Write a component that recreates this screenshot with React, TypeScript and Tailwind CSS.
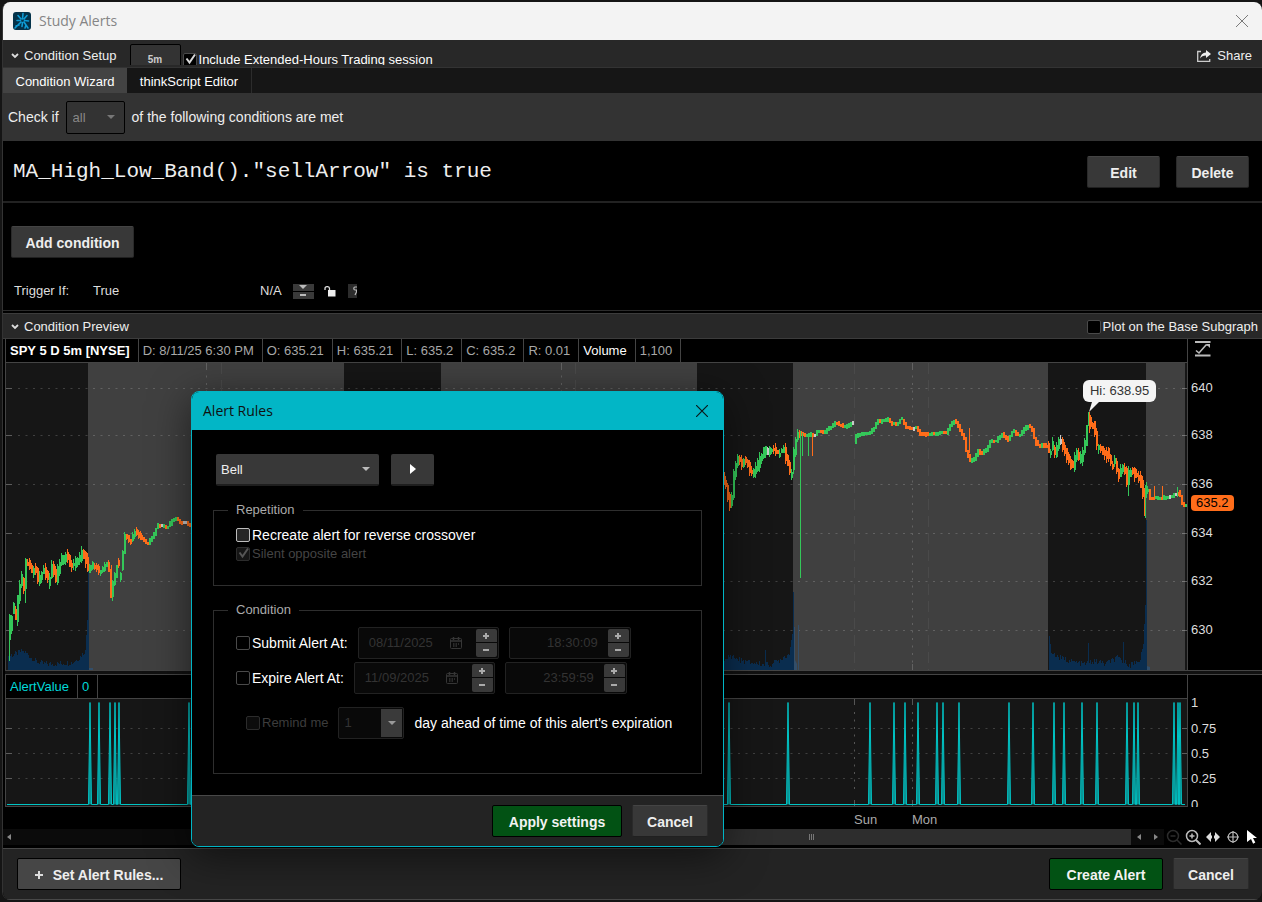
import { useId, type ReactNode } from "react";

type Point = [number, number];

interface Bar {
  x: number;
  top: number;
  bottom: number;
  color: string;
}

const UP = "#34c759";
const DOWN = "#ff6d1a";
const FLAT = "#c8c8c8";

const CHART_W = 1182;
const PRICE_H = 307;
const ALERT_H = 107;

const PRICE_TICKS = [
  { label: "640", y: 25 },
  { label: "638", y: 72 },
  { label: "636", y: 121 },
  { label: "634", y: 170 },
  { label: "632", y: 218 },
  { label: "630", y: 267 },
];

const ALERT_TICKS = [
  { label: "1", y: 4 },
  { label: "0.75", y: 30 },
  { label: "0.5", y: 55 },
  { label: "0.25", y: 80 },
  { label: "0", y: 106 },
];

const QUOTE = [
  "D: 8/11/25 6:30 PM",
  "O: 635.21",
  "H: 635.21",
  "L: 635.2",
  "C: 635.2",
  "R: 0.01",
];

// extended-hours sessions, drawn lighter
const SESSIONS: Point[] = [
  [83, 339],
  [436, 692],
  [788, 1043],
  [1141, 1180],
];

// price path, split where the feed has a gap
const PRICE_PATHS: { spread: number; points: Point[] }[] = [
  {
    spread: 6,
    points: [
      [4, 280], [5, 265], [7, 261], [9, 246], [12, 255], [14, 235], [17, 218], [20, 225],
      [22, 200], [25, 201], [28, 208], [31, 206], [34, 215], [36, 216], [39, 208], [42, 211],
      [45, 218], [48, 205], [52, 216], [54, 208], [57, 198], [60, 196], [63, 193], [66, 201],
      [69, 203], [72, 200], [76, 193], [78, 189], [81, 196], [84, 206],
    ],
  },
  {
    spread: 3,
    points: [
      [85, 206], [88, 203], [92, 204], [95, 209], [99, 206], [103, 201], [105, 208], [107, 232],
      [109, 221], [112, 208], [114, 200], [116, 213], [118, 197], [121, 173], [124, 175],
      [126, 178], [129, 172], [132, 169], [135, 173],
    ],
  },
  {
    spread: 2,
    points: [
      [136, 173], [139, 176], [143, 181], [147, 176], [150, 171], [153, 163], [158, 163],
      [163, 164], [168, 158], [172, 156], [177, 160], [182, 160], [188, 164],
    ],
  },
  {
    spread: 6,
    points: [
      [718, 114], [722, 123], [724, 133], [726, 142], [728, 133], [730, 111], [732, 103],
      [734, 96], [738, 100], [741, 98], [745, 106], [749, 109], [752, 106], [756, 96], [760, 87],
      [765, 89], [770, 88], [775, 91], [780, 87], [783, 96], [787, 112], [789, 98], [792, 77],
      [794, 72],
    ],
  },
  {
    spread: 2,
    points: [
      [795, 70], [798, 71], [802, 73], [806, 71], [810, 72], [814, 68], [819, 70], [825, 65],
      [832, 60], [836, 62], [840, 64], [845, 62], [848, 60],
    ],
  },
  {
    spread: 2,
    points: [
      [850, 79], [852, 73], [858, 71], [865, 70], [870, 65], [873, 59], [878, 58], [884, 56],
      [888, 61], [893, 61], [897, 56], [902, 64], [908, 66], [912, 64], [916, 71], [922, 71],
      [930, 71], [937, 70], [942, 70], [947, 61], [951, 58], [955, 65], [960, 75], [962, 88],
      [966, 98], [970, 96], [974, 88], [978, 91], [983, 85], [986, 78], [992, 78], [998, 71],
      [1004, 77], [1009, 68], [1015, 73], [1020, 66], [1025, 63], [1028, 67], [1031, 78],
      [1035, 83], [1040, 82], [1042, 83],
    ],
  },
  {
    spread: 6,
    points: [
      [1043, 83], [1046, 91], [1048, 83], [1051, 90], [1054, 81], [1057, 79], [1060, 85],
      [1063, 95], [1066, 101], [1069, 103], [1072, 93], [1077, 96], [1080, 85], [1082, 73],
      [1084, 57], [1087, 61], [1090, 65], [1093, 83], [1097, 85], [1101, 91], [1104, 91],
      [1108, 103], [1111, 98], [1114, 110], [1118, 106], [1121, 108], [1123, 118], [1125, 111],
      [1128, 108], [1132, 111], [1135, 116], [1138, 125], [1140, 140], [1141, 128],
    ],
  },
  {
    spread: 2,
    points: [
      [1142, 127], [1144, 127], [1146, 135], [1150, 135], [1157, 135], [1163, 135], [1170, 132],
      [1175, 131], [1178, 140], [1180, 142],
    ],
  },
];

const WICKS: Bar[] = [
  { x: 4, top: 265, bottom: 298, color: UP },
  { x: 20, top: 215, bottom: 240, color: UP },
  { x: 106, top: 202, bottom: 235, color: DOWN },
  { x: 107, top: 220, bottom: 238, color: UP },
  { x: 795, top: 68, bottom: 215, color: UP },
  { x: 797, top: 70, bottom: 93, color: UP },
  { x: 803, top: 71, bottom: 93, color: UP },
  { x: 807, top: 71, bottom: 93, color: DOWN },
  { x: 964, top: 65, bottom: 90, color: DOWN },
  { x: 1084, top: 49, bottom: 70, color: DOWN },
  { x: 1123, top: 103, bottom: 133, color: UP },
  { x: 1139, top: 125, bottom: 153, color: DOWN },
  { x: 1140, top: 122, bottom: 155, color: UP },
  { x: 1149, top: 123, bottom: 135, color: DOWN },
  { x: 1157, top: 123, bottom: 135, color: DOWN },
  { x: 1172, top: 124, bottom: 134, color: UP },
];

const VOLUME: Point[][] = [
  [[3, 14], [10, 16], [17, 19], [23, 15], [30, 9], [38, 6], [50, 6], [60, 7], [68, 8], [74, 12], [80, 20], [82, 50], [83, 99]],
  [[719, 7], [724, 15], [730, 12], [740, 8], [755, 6], [765, 5], [772, 9], [780, 14], [784, 16], [786, 30], [787, 36], [788, 78]],
  [[1044, 34], [1046, 17], [1055, 12], [1065, 9], [1078, 6], [1090, 9], [1100, 6], [1112, 12], [1125, 5], [1135, 11], [1138, 26], [1140, 65], [1141, 150]],
];

const VOLUME_SPIKES: Point[] = [
  [760, 20],
  [1083, 27],
  [1118, 28],
];

const ALERTS = [
  85, 94, 105, 110, 114, 184, 724, 783, 865, 889, 900, 913, 932, 938, 954, 1004, 1028, 1049, 1059,
  1077, 1092, 1122, 1129, 1133, 1169, 1173, 1175,
];

// repeatable pseudo random value in 0..1
function noise(seed: number) {
  const v = Math.sin(seed * 12.9898) * 43758.5453;
  return v - Math.floor(v);
}

function valueAt(points: Point[], x: number) {
  for (let i = 1; i < points.length; i++) {
    const [x0, y0] = points[i - 1];
    const [x1, y1] = points[i];
    if (x <= x1) return y0 + ((y1 - y0) * (x - x0)) / (x1 - x0);
  }
  return points[points.length - 1][1];
}

// each bar has a 2px body, active sessions also get a 1px wick
function buildBars(points: Point[], spread: number): (Bar & { w: number })[] {
  const bars: (Bar & { w: number })[] = [];
  const end = points[points.length - 1][0];
  for (let x = points[0][0]; x <= end; x += 2) {
    const y = valueAt(points, x + 1) + (noise(x + 0.1) - 0.5) * spread * 0.5;
    const slope = valueAt(points, x + 2) - valueAt(points, x);
    const n = noise(x);
    let color = slope + (n - 0.5) * spread * 0.9 > 0 ? DOWN : UP;
    if (n > 0.94 && Math.abs(slope) < 2) color = FLAT;
    const half = 1.2 + noise(x + 0.3) * spread * 0.5 + Math.abs(slope) / 2;
    const top = Math.round(y - half);
    const bottom = Math.round(y + half);
    bars.push({ x, top, bottom, color, w: 2 });
    if (spread > 2) {
      bars.push({
        x,
        top: Math.round(top - noise(x + 0.5) * spread * 0.7),
        bottom: Math.round(bottom + noise(x + 0.7) * spread * 0.7),
        color,
        w: 1,
      });
    }
  }
  return bars;
}

const PRICE_BARS = PRICE_PATHS.flatMap((p) => buildBars(p.points, p.spread));

const VOLUME_BARS = VOLUME.flatMap((points) => {
  const bars: Point[] = [];
  for (let x = points[0][0]; x <= points[points.length - 1][0]; x++) {
    const h = valueAt(points, x);
    bars.push([x, Math.round(h + (h < 20 ? (noise(x) - 0.5) * 6 : 0))]);
  }
  return bars;
});

const ALERT_LINE =
  "M2 105.5" + ALERTS.map((x) => ` L${x - 1.5} 105.5 L${x} 3.5 L${x + 1.5} 105.5`).join("") + " L1180 105.5";

function GridRow({ y }: { y: number }) {
  return (
    <g stroke="#fff" strokeOpacity={0.18}>
      <line x1={13} x2={CHART_W - 6} y1={y + 0.5} y2={y + 0.5} strokeDasharray="2 5.5" />
      <line x1={0} x2={7} y1={y + 0.5} y2={y + 0.5} strokeOpacity={0.3} />
      <line x1={CHART_W - 5} x2={CHART_W} y1={y + 0.5} y2={y + 0.5} strokeOpacity={0.3} />
    </g>
  );
}

function PriceChart() {
  return (
    <svg
      className="block h-[307px] w-full"
      viewBox={`0 0 ${CHART_W} ${PRICE_H}`}
      preserveAspectRatio="none"
    >
      <rect width={CHART_W} height={PRICE_H} fill="#161616" />
      {SESSIONS.map(([from, to]) => (
        <rect key={from} x={from} width={to - from} height={PRICE_H} fill="#404040" />
      ))}

      {/* Grid */}
      {PRICE_TICKS.map((t) => (
        <GridRow key={t.label} y={t.y} />
      ))}
      {[201, 556, 907].map((x) => (
        <g key={x} stroke="#626262">
          <line x1={x + 0.5} x2={x + 0.5} y1={5} y2={PRICE_H} strokeDasharray="2 5.5" />
          <line x1={x + 0.5} x2={x + 0.5} y1={0} y2={6} />
          <line x1={x + 0.5} x2={x + 0.5} y1={PRICE_H - 6} y2={PRICE_H} />
        </g>
      ))}
      {[216, 570, 849, 923].map((x) => (
        <line key={x} x1={x + 0.5} x2={x + 0.5} y1={0} y2={PRICE_H} stroke="#4a4a4a" strokeDasharray="11 6" />
      ))}

      {/* Volume */}
      {[...VOLUME_BARS, ...VOLUME_SPIKES].map(([x, h], i) => (
        <rect key={i} x={x} y={PRICE_H - h} width={1} height={h} fill="#0a2d4f" />
      ))}
      <rect x={793} y={262} width={1} height={45} fill="#334e69" />
      <rect x={789} y={264} width={1} height={43} fill="#334e69" />
      <path d="M84 307v-2h4v2zM790 307v-10l2 4v6zM1142 307v-4l3 1v3z" fill="#334e69" />

      {/* Candles */}
      {PRICE_BARS.map((b, i) => (
        <rect key={i} x={b.x} y={b.top} width={b.w} height={b.bottom - b.top} fill={b.color} />
      ))}
      {WICKS.map((b) => (
        <rect key={b.x} x={b.x} y={b.top} width={1} height={b.bottom - b.top} fill={b.color} />
      ))}
      <line x1={0.5} x2={0.5} y1={0} y2={PRICE_H} stroke="#444" />
    </svg>
  );
}

function AlertChart() {
  return (
    <svg
      className="block h-[107px] w-full"
      viewBox={`0 0 ${CHART_W} ${ALERT_H}`}
      preserveAspectRatio="none"
    >
      <rect width={CHART_W} height={ALERT_H} fill="#161616" />
      {ALERT_TICKS.slice(1, 4).map((t) => (
        <GridRow key={t.label} y={t.y - 1} />
      ))}
      {[849, 907].map((x) => (
        <g key={x} stroke="#555">
          <line x1={x + 0.5} x2={x + 0.5} y1={13} y2={90} strokeDasharray="2 5.5" />
          <line x1={x + 0.5} x2={x + 0.5} y1={0} y2={6} />
          <line x1={x + 0.5} x2={x + 0.5} y1={101} y2={107} />
        </g>
      ))}
      <path d={ALERT_LINE} fill="#0b8f90" stroke="#00c3c4" strokeWidth={1} strokeLinejoin="bevel" />
      <line x1={0.5} x2={0.5} y1={0} y2={ALERT_H} stroke="#444" />
    </svg>
  );
}

interface CheckProps {
  children: ReactNode;
  checked?: boolean;
  disabled?: boolean;
  box?: string;
  text?: string;
  tick?: string;
}

function Check({
  children,
  checked,
  disabled,
  box = "border-[#4a4a4a] bg-black",
  text = "text-white",
  tick = "text-[#d8d8d8]",
}: CheckProps) {
  const id = useId();
  return (
    <div className="flex shrink-0 items-center gap-0.5">
      <span className="relative flex">
        <input
          id={id}
          type="checkbox"
          defaultChecked={checked}
          disabled={disabled}
          className={`h-3.5 w-3.5 appearance-none rounded-xs border ${box}`}
        />
        {checked && (
          <svg
            className={`pointer-events-none absolute inset-0 h-3.5 w-3.5 ${tick}`}
            viewBox="0 0 14 14"
            fill="none"
            stroke="currentColor"
            strokeWidth={2}
          >
            <path d="M3.5 5.5l3 4L12 1.5" />
          </svg>
        )}
      </span>
      <label htmlFor={id} className={`whitespace-nowrap ${text}`}>
        {children}
      </label>
    </div>
  );
}

function Caret({ className = "" }: { className?: string }) {
  return (
    <svg className={`pointer-events-none h-1 w-2 ${className}`} viewBox="0 0 8 4" fill="currentColor">
      <path d="M0 0h8L4 4z" />
    </svg>
  );
}

function DarkButton({ children, className = "" }: { children: ReactNode; className?: string }) {
  return (
    <button
      type="button"
      className={`h-8 rounded-xs border border-t-[#444] border-r-[#2a2a2a] border-b-[#202020] border-l-[#2a2a2a] bg-[#383838] pt-0.5 text-sm font-bold text-[#eee] ${className}`}
    >
      {children}
    </button>
  );
}

function GreenButton({ children, className = "" }: { children: ReactNode; className?: string }) {
  return (
    <button
      type="button"
      className={`h-8 rounded-xs border border-black bg-[#025214] pt-0.5 text-sm font-bold text-[#f2f2f2] ${className}`}
    >
      {children}
    </button>
  );
}

function Stepper({ name }: { name: string }) {
  return (
    <div className="flex flex-col gap-px">
      <button type="button" aria-label={`${name} up`} className="flex h-[13px] w-[21px] items-center justify-center rounded-t-xs bg-[#3a3a3a]">
        <svg className="h-[6px] w-[6px]" viewBox="0 0 6 6" fill="#aaa">
          <path d="M2 0h2v2h2v2H4v2H2V4H0V2h2z" />
        </svg>
      </button>
      <button type="button" aria-label={`${name} down`} className="flex h-[14px] w-[21px] items-center justify-center rounded-b-xs bg-[#3a3a3a]">
        <svg className="h-[2px] w-[6px]" viewBox="0 0 6 2" fill="#aaa">
          <path d="M0 0h6v2H0z" />
        </svg>
      </button>
    </div>
  );
}

function DateBox({ name, value }: { name: string; value: string }) {
  return (
    <div className="flex h-8 w-[141px] items-center justify-between rounded-xs border border-[#222] bg-[#090909] pr-px pl-2.5">
      <input aria-label={name} disabled defaultValue={value} className="w-[72px] bg-transparent text-[#333]" />
      <svg className="mr-1 h-3 w-3" viewBox="0 0 12 12" fill="none" stroke="#363636">
        <rect x=".5" y="1.5" width="11" height="10" rx="1" />
        <path d="M0 4h12M3.5 0v3M8.5 0v3" strokeWidth="1.5" />
        <path d="M3 7h6M3 9h4" strokeDasharray="1.5 1" strokeWidth="1.5" />
      </svg>
      <Stepper name={name} />
    </div>
  );
}

function TimeBox({ name, value }: { name: string; value: string }) {
  return (
    <div className="flex h-8 w-[122px] items-center justify-end gap-2.5 rounded-xs border border-[#222] bg-[#090909] pr-px">
      <input aria-label={name} disabled defaultValue={value} className="w-20 bg-transparent text-right text-[#333]" />
      <Stepper name={name} />
    </div>
  );
}

function AlertRulesDialog() {
  return (
    <div
      role="dialog"
      aria-label="Alert Rules"
      className="absolute top-[391px] left-[191px] w-[533px] overflow-hidden rounded-lg border border-[#00b5c5] bg-black shadow-[0_8px_40px_rgba(0,0,0,0.55)]"
    >
      <div className="flex h-[38px] items-center justify-between bg-[#02b6c6] pr-[15px] pl-[11px] font-['Open_Sans',sans-serif] text-sm text-[#101010]">
        <h2>Alert Rules</h2>
        <button type="button" aria-label="Close">
          <svg className="h-3 w-3" viewBox="0 0 12 12" stroke="#0a1a1c" strokeWidth={1.2}>
            <path d="M0 0l12 12M12 0L0 12" />
          </svg>
        </button>
      </div>

      <div className="flex flex-col px-[21px] pt-6 pb-[21px]">
        <div className="flex gap-3 pl-[3px]">
          <div className="relative w-[163px]">
            <select
              aria-label="Sound"
              className="h-8 w-full appearance-none rounded-xs border-b-2 border-[#1e1e1e] bg-[#383838] pt-0.5 pl-[5px] text-[#eee]"
            >
              <option>Bell</option>
            </select>
            <Caret className="absolute top-[13px] right-[9px] text-[#bbb]" />
          </div>
          <button
            type="button"
            aria-label="Play sound"
            className="flex h-8 w-[43px] items-center justify-center rounded-xs border-b-2 border-[#1e1e1e] bg-[#383838]"
          >
            <svg className="h-2.5 w-1.5" viewBox="0 0 6 10" fill="#fff">
              <path d="M0 0l6 5-6 5z" />
            </svg>
          </button>
        </div>

        <fieldset className="mt-3.5 h-[86px] border border-[#2e2e2e] pl-[22px]">
          <legend className="-ml-2 h-5 px-2 leading-5 text-[#aaa]">Repetition</legend>
          <div className="flex flex-col gap-px pt-1.5 leading-[18px]">
            <Check box="border-[#bdbdbd] bg-[#262626]" text="text-sm leading-[18px] text-white">
              Recreate alert for reverse crossover
            </Check>
            <Check checked disabled box="border-[#2c2c2c] bg-[#151515]" text="text-[#444]" tick="text-[#555]">
              Silent opposite alert
            </Check>
          </div>
        </fieldset>

        <fieldset className="mt-3.5 h-[174px] border border-[#2e2e2e] pl-[22px]">
          <legend className="-ml-2 h-5 px-2 leading-5 text-[#aaa]">Condition</legend>
          <div className="flex flex-col gap-[3px] pt-[7px]">
            <div className="flex items-center gap-2.5">
              <Check text="text-sm text-white">Submit Alert At:</Check>
              <DateBox name="Submit date" value="08/11/2025" />
              <TimeBox name="Submit time" value="18:30:09" />
            </div>
            <div className="flex items-center gap-2.5">
              <Check text="text-sm text-white">Expire Alert At:</Check>
              <DateBox name="Expire date" value="11/09/2025" />
              <TimeBox name="Expire time" value="23:59:59" />
            </div>
          </div>
          <div className="mt-[13px] flex items-center gap-2.5 pl-2.5">
            <Check disabled box="border-[#2c2c2c] bg-[#0c0c0c]" text="text-[#3c3c3c]">
              Remind me
            </Check>
            <div className="relative h-8 w-[66px] rounded-xs border border-[#222] bg-[#090909] p-px">
              <select aria-label="Days" disabled className="h-7 w-full appearance-none bg-transparent pl-1 text-[#333]">
                <option>1</option>
              </select>
              <span className="pointer-events-none absolute top-px right-px flex h-7 w-[21px] items-center justify-center bg-[#3a3a3a] text-[#999]">
                <Caret />
              </span>
            </div>
            <span className="text-sm text-white">day ahead of time of this alert's expiration</span>
          </div>
        </fieldset>
      </div>

      <div className="flex h-[51px] items-center justify-end gap-2.5 border-t border-[#484848] bg-[#232323] pr-[15px]">
        <GreenButton className="w-[130px]">Apply settings</GreenButton>
        <DarkButton className="w-[76px]">Cancel</DarkButton>
      </div>
    </div>
  );
}

function Chevron() {
  return (
    <svg className="h-1.5 w-2" viewBox="0 0 8 6" fill="none" stroke="#ddd" strokeWidth={1.8}>
      <path d="M1 1l3 3 3-3" />
    </svg>
  );
}

function ChartTools() {
  return (
    <div className="grid w-[98px] shrink-0 grid-cols-5 place-items-center">
      <button type="button" aria-label="Zoom out" disabled>
        <svg className="h-4 w-4" viewBox="0 0 16 16" fill="none" stroke="#2c2c2c" strokeWidth={1.5}>
          <circle cx="7" cy="7" r="5.5" />
          <path d="M4.5 7h5M11 11l4.5 4.5" />
        </svg>
      </button>
      <button type="button" aria-label="Zoom in">
        <svg className="h-4 w-4" viewBox="0 0 16 16" fill="none" stroke="#bbb" strokeWidth={1.5}>
          <circle cx="7" cy="7" r="5.5" />
          <path d="M4.5 7h5M7 4.5v5" />
          <path d="M11 11l4.5 4.5" strokeWidth={2} />
        </svg>
      </button>
      <button type="button" aria-label="Pan">
        <svg className="h-2.5 w-3.5" viewBox="0 0 14 10" fill="#ddd">
          <path d="M0 5l5-5v3.500h1v3H5V10zM14 5L9 0v3.500H8v3h1V10z" />
        </svg>
      </button>
      <button type="button" aria-label="Crosshair">
        <svg className="h-3 w-3" viewBox="0 0 12 12" fill="none" stroke="#bbb" strokeWidth={1.2}>
          <circle cx="6" cy="6" r="4.800" />
          <path d="M6 0v12M0 6h12" />
        </svg>
      </button>
      <button type="button" aria-label="Pointer">
        <svg className="h-3.5 w-3" viewBox="0 0 12 14" fill="#fff">
          <path d="M1 0l10 8H7l2.300 4.600-2.200 1.200L5 9l-4 3z" />
        </svg>
      </button>
    </div>
  );
}

function Cell({ children, className = "" }: { children: ReactNode; className?: string }) {
  return (
    <span className={`flex items-center border-r border-[#444] pr-2 pl-1 ${className}`}>{children}</span>
  );
}

export default function App() {
  return (
    <div className="min-h-screen bg-[#151515] py-0.5 pl-0.5 font-['Liberation_Sans',Arial,sans-serif] text-[13px] leading-4 text-[#ddd]">
      <main className="flex flex-col overflow-hidden rounded-lg border-l border-[#333] bg-black">
        {/* Title bar */}
        <header className="flex h-[38px] items-center bg-[#f3f3f3] pr-3.5 pl-2.5 font-['Open_Sans',sans-serif] text-sm text-[#858585]">
          <svg className="h-[18px] w-[18px]" viewBox="0 0 18 18">
            <rect width="18" height="18" rx="3" fill="#04324a" />
            <g stroke="#0f9bd4" strokeWidth={1.6} fill="none" strokeLinecap="round">
              <path d="M9.500 7L10 1.500M8 7L5 3.500M7.500 8.500H4M8 10l-6 6M9.500 10.500L9 14.500M11 10l4 6M11.500 8.500l4 .5M11 7l3-3.500M6 13l-3 1M13 13l-1 3" />
            </g>
          </svg>
          <h1 className="ml-2 flex-1">Study Alerts</h1>
          <button type="button" aria-label="Close window">
            <svg className="h-3 w-3" viewBox="0 0 12 12" stroke="#7a7a7a">
              <path d="M0 0l12 12M12 0L0 12" />
            </svg>
          </button>
        </header>

        {/* Condition setup */}
        <div className="flex h-7 items-start justify-between border-b border-[#333] bg-[#282828] pr-2.5 pl-2">
          <div className="flex h-[25px] items-start overflow-hidden">
            <button type="button" className="flex items-center gap-[5px] pt-2 text-[#eee]">
              <Chevron />
              Condition Setup
            </button>
            <button
              type="button"
              className="mt-1 ml-[13px] h-8 w-[51px] shrink-0 rounded-xs border border-black bg-[#333] text-[10px] font-bold text-[#ccc]"
            >
              5m
            </button>
            <div className="mt-3 ml-0.5">
              <Check checked>Include Extended-Hours Trading session</Check>
            </div>
          </div>
          <button type="button" className="flex items-center gap-1.5 pt-2 text-[#eee]">
            <svg className="h-3 w-3.5" viewBox="0 0 14 12" fill="none" stroke="#ccc" strokeWidth={1.3}>
              <path d="M4 1.500H.7v9.800h12V9" />
              <path d="M9 0l5 4-5 4V5.500C6 5.500 4.500 6.500 3 8.500 3.500 5 5.500 2.800 9 2.500z" fill="#eee" stroke="none" />
            </svg>
            Share
          </button>
        </div>

        <nav className="flex h-[25px] bg-[#161616] text-white">
          <button type="button" className="w-[124px] bg-[#434343] pt-0.5">
            Condition Wizard
          </button>
          <button type="button" className="w-[125px] border-r border-[#2c2c2c] pt-0.5">
            thinkScript Editor
          </button>
        </nav>

        <div className="flex h-12 items-center gap-[7px] bg-[#333] pl-[5px] text-sm text-[#eee]">
          <label htmlFor="match">Check if</label>
          <div className="relative">
            <select
              id="match"
              disabled
              className="h-[33px] w-[59px] appearance-none rounded-xs border border-black bg-[#333] pt-0.5 pl-1.5 text-[13px] text-[#888] opacity-100"
            >
              <option>all</option>
            </select>
            <Caret className="absolute top-3.5 right-2.5 text-[#777]" />
          </div>
          <span>of the following conditions are met</span>
        </div>

        {/* Condition list */}
        <div className="flex h-[62px] items-center border-b-2 border-[#222] pt-0.5 pr-[13px] pl-2.5">
          <code className="flex-1 font-['Liberation_Mono',monospace] text-[21px] text-[#eee]">
            MA_High_Low_Band()."sellArrow" is true
          </code>
          <div className="flex gap-4">
            <DarkButton className="w-[73px]">Edit</DarkButton>
            <DarkButton className="w-[73px]">Delete</DarkButton>
          </div>
        </div>

        <div className="flex flex-col items-start gap-[19px] border-b border-[#2c2c2c] pt-[23px] pb-[5px] pl-2">
          <DarkButton className="w-[123px]">Add condition</DarkButton>
          <div className="flex h-7 items-center pl-[3px]">
            <span className="w-[79px]">Trigger If:</span>
            <span className="w-[167px]">True</span>
            <span>N/A</span>
            <div className="ml-[11px] flex flex-col gap-px">
              <button type="button" aria-label="Expand" className="flex h-[7px] w-[21px] items-center justify-center bg-[#3a3a3a] text-[#bbb]">
                <Caret />
              </button>
              <button type="button" aria-label="Collapse" className="flex h-[7px] w-[21px] items-center justify-center bg-[#3a3a3a]">
                <span className="h-0.5 w-1.5 bg-[#bbb]" />
              </button>
            </div>
            <button type="button" aria-label="Unlock" className="ml-2.5">
              <svg className="h-[11px] w-3" viewBox="0 0 12 11" fill="none" stroke="#ddd" strokeWidth={1.3}>
                <path d="M1 4V2.500C1 0 5.500 0 5.500 2.500V5" />
                <rect x="4" y="4" width="7.500" height="6.500" fill="#eee" stroke="none" />
              </svg>
            </button>
            <button type="button" aria-label="Percent" className="ml-3 flex h-3.5 w-[9px] items-center justify-end bg-[#2c2c2c]">
              <svg className="h-2.5 w-1" viewBox="0 0 4 10" fill="none" stroke="#bbb" strokeWidth={1.2}>
                <path d="M4 1H2Q.8 1 .8 2.500T2 4h2M3.500 4v2L2 9" />
              </svg>
            </button>
          </div>
        </div>

        {/* Condition preview */}
        <div className="mt-0.5 flex h-[26px] items-center justify-between border-y border-[#3c3c3c] bg-[#282828] pt-px pr-1 pl-2">
          <button type="button" className="flex items-center gap-[5px] text-[#eee]">
            <Chevron />
            Condition Preview
          </button>
          <Check text="text-[#eee]">Plot on the Base Subgraph</Check>
        </div>

        <div className="flex pl-0.5">
          <section className="min-w-0 flex-1 border-r border-[#444]">
            <div className="flex h-6 border-b border-l border-[#444] text-[#a8a8a8]">
              <Cell className="font-bold text-white">SPY 5 D 5m [NYSE]</Cell>
              {QUOTE.map((q) => (
                <Cell key={q}>{q}</Cell>
              ))}
              <Cell className="text-white">Volume</Cell>
              <Cell>1,100</Cell>
            </div>
            <div className="relative">
              <PriceChart />
              <div className="absolute top-[17px] left-[91.2%] rounded-md bg-[#f4f4f4] px-[7px] py-1 leading-3.5 text-[#333]">
                Hi: 638.95
                <svg className="absolute top-full left-1.5 h-2.5 w-2.5" viewBox="0 0 10 10" fill="#f4f4f4">
                  <path d="M3 0h7L0 10z" />
                </svg>
              </div>
            </div>
          </section>
          <aside className="w-[74px] shrink-0">
            <svg className="mt-0.5 ml-[7px] block h-4 w-4" viewBox="0 0 16 16" fill="none" stroke="#bbb" strokeWidth={1.6}>
              <path d="M0 1h15.500M0 14.500h15.500" strokeWidth={2} />
              <path d="M1 9.500l3 2.500 7-8h3.500" />
              <path d="M11 3h4v4z" fill="#bbb" stroke="none" />
            </svg>
            <div className="relative mt-1.5">
              {PRICE_TICKS.map((t) => (
                <span key={t.label} className="absolute left-[3px] -translate-y-1/2" style={{ top: t.y }}>
                  {t.label}
                </span>
              ))}
              <span className="absolute top-[132px] left-[3px] rounded bg-[#ff6d1a] px-[5px] text-black">635.2</span>
            </div>
          </aside>
        </div>
        <div className="ml-0.5 h-[5px] border-y border-[#444] bg-[#111]" />

        <div className="flex pl-0.5">
          <section className="min-w-0 flex-1 border-r border-b border-[#444]">
            <div className="flex h-6 border-b border-l border-[#444] text-[#00d8d9]">
              <Cell>AlertValue</Cell>
              <Cell>0</Cell>
            </div>
            <AlertChart />
          </section>
          <aside className="relative w-[74px] shrink-0 overflow-hidden">
            {ALERT_TICKS.map((t) => (
              <span key={t.label} className="absolute left-[3px] -translate-y-1/2" style={{ top: t.y + 24 }}>
                {t.label}
              </span>
            ))}
          </aside>
        </div>

        <div className="relative h-[22px] text-[#aaa]">
          <span className="absolute top-[5px] left-[67.600%]">Sun</span>
          <span className="absolute top-[5px] left-[72.200%]">Mon</span>
        </div>

        {/* Scroll bar */}
        <div className="mb-[3px] flex h-4 bg-black">
          <div className="flex flex-1 items-center bg-[#0b0b0b] text-[#888]">
            <svg className="ml-1 h-1.5 w-1" viewBox="0 0 4 6" fill="currentColor">
              <path d="M4 0v6L0 3z" />
            </svg>
            <div className="ml-auto flex h-4 w-[55%] items-center justify-center gap-px bg-[#2d2d2d]">
              <span className="h-1.5 w-px bg-[#777]" />
              <span className="h-1.5 w-px bg-[#777]" />
              <span className="h-1.5 w-px bg-[#777]" />
            </div>
            <div className="flex w-[33px] items-center justify-between px-1.5">
              <svg className="h-1.5 w-1" viewBox="0 0 4 6" fill="currentColor">
                <path d="M4 0v6L0 3z" />
              </svg>
              <svg className="h-1.5 w-1" viewBox="0 0 4 6" fill="currentColor">
                <path d="M0 0v6l4-3z" />
              </svg>
            </div>
          </div>
          <ChartTools />
        </div>

        <footer className="flex h-[52px] items-center border-t border-b border-[#484848] bg-[#232323] pr-[13px] pl-3.5">
          <button
            type="button"
            className="flex h-8 w-[164px] items-center justify-center gap-2.5 rounded-xs border border-black bg-[#464646] pt-0.5 text-sm font-bold text-[#eee]"
          >
            <svg className="h-2 w-2" viewBox="0 0 8 8" fill="#ddd">
              <path d="M3 0h2v3h3v2H5v3H3V5H0V3h3z" />
            </svg>
            Set Alert Rules...
          </button>
          <div className="ml-auto flex gap-2.5">
            <GreenButton className="w-[114px]">Create Alert</GreenButton>
            <DarkButton className="w-[76px]">Cancel</DarkButton>
          </div>
        </footer>
      </main>

      <AlertRulesDialog />
    </div>
  );
}
